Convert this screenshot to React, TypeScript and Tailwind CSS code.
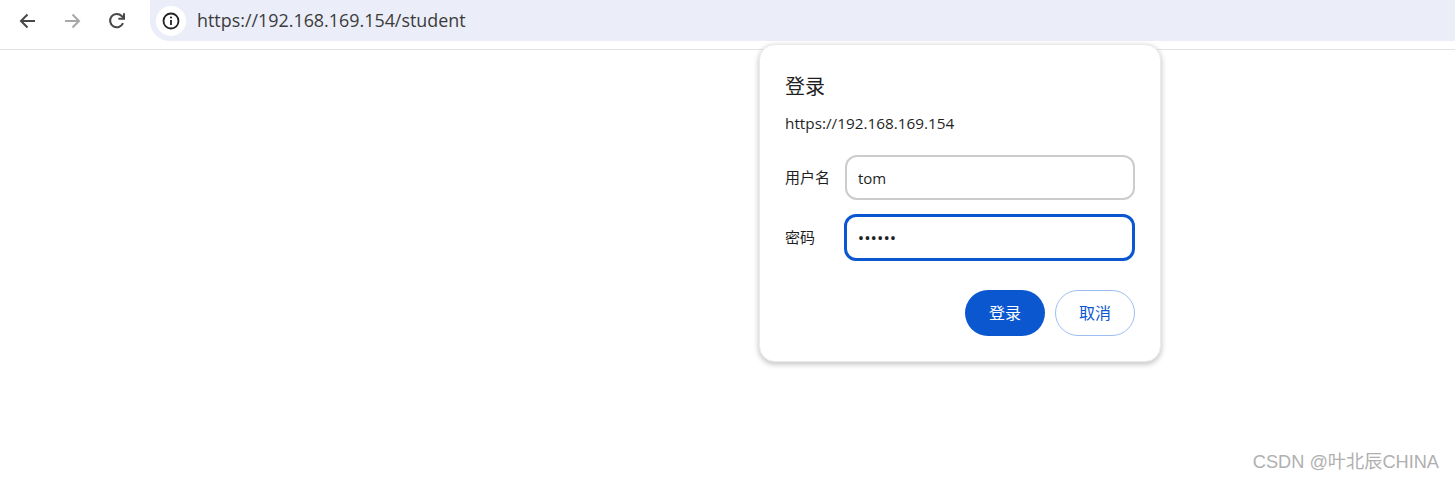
const font = { fontFamily: '"Open Sans", "Noto Sans CJK SC", sans-serif' };

const Toolbar = () => {
  return (
    <div className="flex h-[50px] items-start border-b border-[#e3e3e3] bg-white">
      <div className="flex h-[41px] items-center">
        {/* Back */}
        <svg className="ml-[18px] h-[20px] w-[20px]" viewBox="0 0 20 20" fill="none" stroke="#474747" strokeWidth="2">
          <path d="M17 10H3.5M9.5 3.5 3 10l6.5 6.5" />
        </svg>
        {/* Forward */}
        <svg className="ml-[24px] h-[20px] w-[20px]" viewBox="0 0 20 20" fill="none" stroke="#a8a8a8" strokeWidth="2">
          <path d="M3 10h13.5M10.5 3.5 17 10l-6.5 6.5" />
        </svg>
        {/* Reload */}
        <svg className="ml-[25px] h-[20px] w-[20px]" viewBox="0 0 20 20" fill="none" stroke="#474747" strokeWidth="2">
          <path d="M16 12.2A6.7 6.7 0 1 1 14.7 5L17 7.2" />
          <path d="M17 2.2V7.8H11.4" />
        </svg>
      </div>
      <div className="ml-[23px] flex h-[41px] flex-1 items-center rounded-bl-[20px] bg-[#ebeef8] pl-[6px]">
        <div className="flex h-[30px] w-[30px] items-center justify-center rounded-full bg-white">
          <svg className="h-[18px] w-[18px]" viewBox="0 0 18 18" fill="none">
            <circle cx="9" cy="9" r="7.5" stroke="#222" strokeWidth="1.8" />
            <path d="M9 8v5" stroke="#222" strokeWidth="1.8" />
            <circle cx="9" cy="5.5" r="1.1" fill="#222" />
          </svg>
        </div>
        <span className="ml-[11px] text-[17.9px] text-[#3b3b3b]" style={font}>
          https://192.168.169.154/student
        </span>
      </div>
    </div>
  );
};

const Field = ({ label, children }: { label: string; children: React.ReactNode }) => {
  return (
    <div className="flex items-center">
      <label className="w-[60px] text-[15px] text-[#1f1f1f]">{label}</label>
      {children}
    </div>
  );
};

const LoginDialog = () => {
  return (
    <div
      className="absolute left-[759px] top-[44px] w-[402px] rounded-[16px] border border-[#ebebeb] bg-white px-[25px] pb-[25px] pt-[28px] shadow-[0_2px_5px_1px_rgba(0,0,0,0.2)]"
      style={font}
    >
      <h1 className="text-[20px] leading-[28px] text-[#1f1f1f]">登录</h1>
      <p className="mt-[11px] text-[15.3px] leading-[22px] text-[#1f1f1f]">https://192.168.169.154</p>
      <div className="mt-[21px] flex flex-col gap-[14px]">
        <Field label="用户名">
          <input
            readOnly
            defaultValue="tom"
            className="h-[45px] w-[290px] rounded-[12px] border-2 border-[#cccccc] px-[11px] text-[15px] text-[#1f1f1f] outline-none"
          />
        </Field>
        <Field label="密码">
          <input
            readOnly
            type="password"
            defaultValue="secret"
            className="-ml-[1px] h-[47px] w-[292px] rounded-[12px] border-[3px] border-[#0b57d0] px-[11px] text-[17px] text-[#1f1f1f] outline-none"
          />
        </Field>
      </div>
      <div className="mt-[29px] flex justify-end gap-[10px]">
        <button className="h-[46px] w-[80px] rounded-full bg-[#0b57d0] text-[16px] text-white">登录</button>
        <button className="h-[46px] w-[80px] rounded-full border border-[#9dbdf5] bg-white text-[16px] text-[#0b57d0]">
          取消
        </button>
      </div>
    </div>
  );
};

export default function App() {
  return (
    <div className="relative h-[480px] w-[1455px] overflow-hidden bg-white">
      <Toolbar />
      <LoginDialog />
      <div
        className="absolute bottom-[6px] right-[16px] text-[18.2px] leading-[24px] text-[#b0b0b0]"
        style={{ fontFamily: '"Liberation Sans", "Noto Sans CJK SC", sans-serif' }}
      >
        CSDN @叶北辰CHINA
      </div>
    </div>
  );
}
